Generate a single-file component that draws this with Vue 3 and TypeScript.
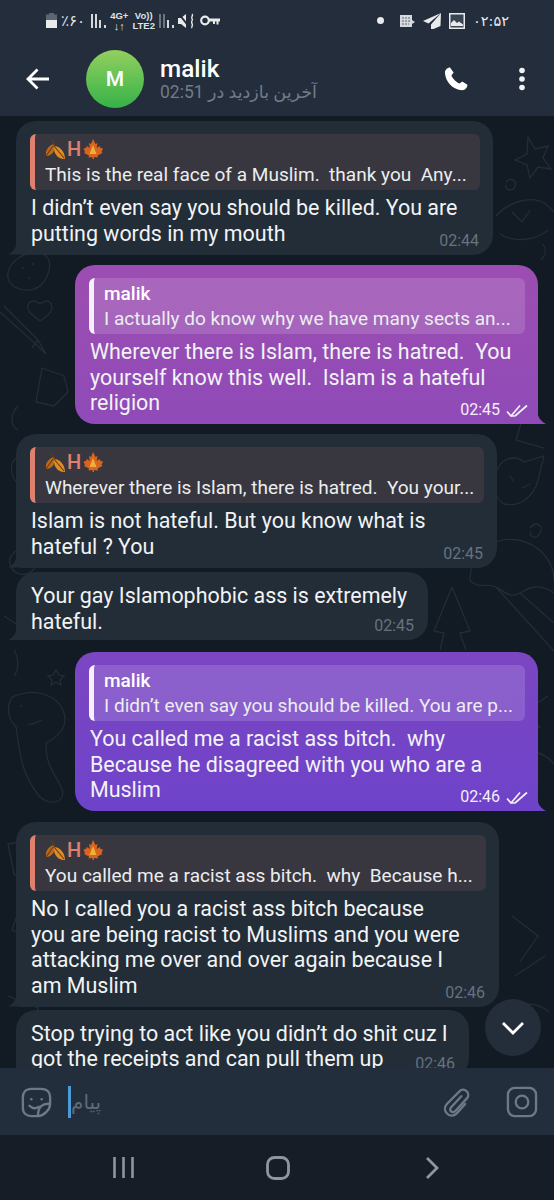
<script setup lang="ts">
// Telegram chat screen, dark theme with the purple outgoing gradient.
interface Message {
  out: boolean
  width: number
  gap: number
  author?: string
  quote?: string
  lines: string[]
  time: string
}

const messages: Message[] = [
  { out: false, width: 477, gap: 0, author: 'H', quote: 'This is the real face of a Muslim.  thank you  Any...', lines: ['I didn’t even say you should be killed. You are', 'putting words in my mouth'], time: '02:44' },
  { out: true, width: 463, gap: 10.5, author: 'malik', quote: 'I actually do know why we have many sects an...', lines: ['Wherever there is Islam, there is hatred.  You', 'yourself know this well.  Islam is a hateful', 'religion'], time: '02:45' },
  { out: false, width: 481, gap: 10, author: 'H', quote: 'Wherever there is Islam, there is hatred.  You your...', lines: ['Islam is not hateful. But you know what is', 'hateful ? You'], time: '02:45' },
  { out: false, width: 412, gap: 4.5, lines: ['Your gay Islamophobic ass is extremely', 'hateful.'], time: '02:45' },
  { out: true, width: 463, gap: 12, author: 'malik', quote: 'I didn’t even say you should be killed. You are p...', lines: ['You called me a racist ass bitch.  why', 'Because he disagreed with you who are a', 'Muslim'], time: '02:46' },
  { out: false, width: 483, gap: 11, author: 'H', quote: 'You called me a racist ass bitch.  why  Because h...', lines: ['No I called you a racist ass bitch because', 'you are being racist to Muslims and you were', 'attacking me over and over again because I', 'am Muslim'], time: '02:46' },
  { out: false, width: 453, gap: 3, lines: ['Stop trying to act like you didn’t do shit cuz I', 'got the receipts and can pull them up'], time: '02:46' },
]
</script>

<template>
  <div class="page">
    <header class="top">
      <div class="status">
        <div class="status-left">
          <svg width="11" height="15" viewBox="0 0 11 15"><path d="M3 0h5v1.500h3V15H0V1.500h3z" fill="#5c6672" /><rect y="7" width="11" height="8" fill="#e8eaec" /></svg>
          <span class="st-text">٪۶۰</span>
          <svg width="15" height="14" viewBox="0 0 15 14"><path d="M0 0h2v14H0zM4 0h2v14H4zM8 6h2v8H8zM13 11h2v3h-2z" fill="#d5d8dc" /></svg>
          <div class="stack"><span>4G+</span><span class="arrows">↓↑</span></div>
          <div class="stack"><span>Vo))</span><span>LTE2</span></div>
          <svg width="15" height="14" viewBox="0 0 15 14"><path d="M0 0h2v14H0zM4 0h2v14H4z" fill="#6b7480" /><path d="M8 6h2v8H8zM13 11h2v3h-2z" fill="#d5d8dc" /></svg>
          <svg width="18" height="16" viewBox="0 0 18 16"><path d="M0 5h3l5-4v14l-5-4H0z" fill="#e8eaec" /><path d="M1 1l11 14" stroke="#242d3b" stroke-width="2" /><path d="M14 1c2 1.500-1.500 3 0 4.500s-1.500 3 0 5 -1 3 0 4.500" fill="none" stroke="#e8eaec" stroke-width="1.400" /></svg>
          <svg width="20" height="11" viewBox="0 0 20 11"><circle cx="5" cy="5.500" r="3.800" fill="none" stroke="#e8eaec" stroke-width="2.200" /><path d="M9 3.500h11v3h-1.500v3h-2v-3h-1.500v2.500h-2V6.500H9z" fill="#e8eaec" /></svg>
        </div>
        <div class="status-right">
          <span class="dot"></span>
          <svg width="15" height="12" viewBox="0 0 15 12"><path d="M0 0h12v5l3 2-3 2v3H0z" fill="#d5d8dc" /><path d="M2 3h8M2 6h8M2 9h7" stroke="#5c6672" stroke-width="1" stroke-dasharray="2 1" /></svg>
          <svg width="18" height="16" viewBox="0 0 18 16"><path d="M18 0L0 8l5.500 2.500L18 0 8 11.500V16h2.500l7-3z" fill="#e8eaec" /></svg>
          <svg width="16" height="16" viewBox="0 0 16 16"><rect width="16" height="16" fill="#e8eaec" /><rect x="1.500" y="1.500" width="13" height="13" fill="#3a4552" /><path d="M2 13V10l3-3 3 3 2-1.500 4 3V13z" fill="#e8eaec" /></svg>
          <span class="clock">۰۲:۵۲</span>
        </div>
      </div>
      <div class="bar">
        <svg class="back" width="24" height="22" viewBox="0 0 24 22"><path d="M23 11H2M11.500 1.500L2 11l9.500 9.500" fill="none" stroke="#fff" stroke-width="2.800" /></svg>
        <div class="avatar">M</div>
        <div class="who">
          <div class="name">malik</div>
          <div class="seen" dir="rtl">آخرین بازدید در 02:51</div>
        </div>
        <svg class="phone" width="26" height="26" viewBox="0 0 24 24"><path d="M6.600 1.500l3.200 4.600-2 2.600c.9 2.700 4.600 6.400 7.500 7.500l2.500-2 4.700 3.200c.2 2.500-2.300 5.100-4.900 5-8.600-.7-15.200-7.700-15.800-16-.1-2.600 2.300-5 4.800-4.900z" fill="#fff" /></svg>
        <svg class="kebab" width="8" height="24" viewBox="0 0 8 24"><circle cx="4" cy="3.500" r="2.800" fill="#f2f3f4" /><circle cx="4" cy="12" r="2.800" fill="#f2f3f4" /><circle cx="4" cy="20.500" r="2.800" fill="#f2f3f4" /></svg>
      </div>
    </header>

    <main class="chat">
      <svg class="doodles" width="554" height="952" viewBox="0 0 554 952" fill="none" stroke="#222d37" stroke-width="1.300">
        <!-- right edge -->
        <path d="M528 21l7 12 13-3-5 12 8 11-13-2-8 11-3-13-12-5 12-6z" />
        <path d="M506 66c4-5 11-2 9 4s-10 5-9-1" />
        <path d="M496 100c14-16 40-22 52-10l6 6M500 118c12 8 34 8 48-4M512 96l10 10 8-12" />
        <path d="M543 128c4 6 2 12 -2 16M500 290l22 14-6 20 28 8" />
        <path d="M498 352c6-12 20-12 26-6l20-6-6 24c-4 16-18 28-34 24-10-6-14-24-6-36zM510 360l4 6M522 372l8-4" />
        <path d="M530 412c6-8 14-2 10 5s-12 4-9-2" />
        <path d="M470 465c0-30 24-45 48-41 22 4 36 22 36 40M470 465c10 8 18 2 26 6s14 12 24 6 20-10 34 0M496 471l58 64M520 477l34 30" />
        <path d="M452 471l18 44-10 2 6 17M452 471l-18 44 10 2-4 17" />
        <path d="M548 580l-22 14 14 18M510 640c16-10 34-4 44 8M512 800l26 20-18 26M505 900c10-14 30-16 44-4M515 860l30-20" />
        <!-- left edge -->
        <path d="M40 137c-16-2-30 8-32 20s12 20 26 16 24-32 6-36zM22 152h2M32 148h2M28 162h2" />
        <path d="M42 187c8-6 14 4 6 12l-8 6-10-8c-6-8 2-16 8-10z" />
        <path d="M0 196l40 36 6 6-8-14-34-34M38 224l-6 8" />
        <path d="M42 252l22 8 4 16-14 14-18-4zM18 290c-8 8-8 20 0 24" />
        <path d="M22 345c-6-6-12 0-10 12s14 16 18 8-2-16-8-20z" />
        <path d="M10 442c6-10 14-14 22-6s4 20-6 22-18-6-16-16zM4 500l34 22" />
        <path d="M56 554l3 5 5 1-4 4 1 5-5-3-5 3 1-5-4-4 5-1z" />
        <path d="M12 581c-6 10-4 22 4 30 4 24 4 46 24 70 12 10 26 4 22-8-8-18-16-22-16-46 12-6 22-16 18-30s-24-28-52-16z" />
        <path d="M20 590h2M42 604c-6 2-10 6-14 4M14 560c6-8 4-20 0-26" />
        <path d="M8 728l38-6 16 30-24 20-24-14zM20 790l30 10-10 24-28-10zM8 880l30 12-4 20" />
      </svg>

      <div class="thread">
        <article
          v-for="(m, i) in messages"
          :key="i"
          class="bubble"
          :class="m.out ? 'out' : 'in'"
          :style="{ width: m.width + 'px', marginTop: m.gap + 'px' }"
        >
          <div v-if="m.quote" class="quote">
            <div class="quote-name">
              <template v-if="!m.out">
                <svg class="leaf" width="21" height="21" viewBox="0 0 21 21">
                  <path d="M1 17C0 11 4 6 9 5c2 5-1 12-8 12z" fill="#b96d1c" />
                  <path d="M9 7c6 0 11 6 11 13-6 1-12-5-11-13z" fill="#df8c23" />
                  <path d="M1 17l7-10M9 7l10 12M6 1c2 1 3 3 3 6" stroke="#6e3810" stroke-width="1.100" fill="none" />
                </svg>
                <span class="h">H</span>
                <svg class="leaf" width="20" height="20" viewBox="0 0 20 20">
                  <path d="M10 0l2.500 5 2-1-.8 5 3-2 .8 2 2.500.5-1.500 3.500 1 1-5 2.500.5 2-4-.5V20H9.500v-2l-4 .5.5-2-5-2.500 1-1L.5 9.500 3 9l.8-2 3 2-.8-5 2 1z" fill="#d9641e" />
                  <path d="M10 6l3.500 9h-7z" fill="#efb03a" />
                </svg>
              </template>
              <template v-else>{{ m.author }}</template>
            </div>
            <div class="quote-text">{{ m.quote }}</div>
          </div>
          <p class="text">
            <span v-for="line in m.lines" :key="line" class="line">{{ line }}</span>
          </p>
          <div class="meta">
            <span>{{ m.time }}</span>
            <svg v-if="m.out" width="22" height="13" viewBox="0 0 22 13" fill="none" stroke="#f5eef9" stroke-width="1.700"><path d="M1 7.500l4 4.500L14 1.500M9 12L21 1.500M5 12h4" /></svg>
          </div>
        </article>
      </div>

      <button class="fab" type="button" aria-label="down">
        <svg width="24" height="14" viewBox="0 0 24 14"><path d="M2 2l10 10L22 2" fill="none" stroke="#fff" stroke-width="2.800" /></svg>
      </button>
    </main>

    <footer class="composer">
      <svg class="ic" width="31" height="31" viewBox="0 0 33 33" fill="none" stroke="#6d7985" stroke-width="2.500">
        <path d="M31 18V11C31 5 27 2 21 2H11C5 2 2 6 2 11v11c0 6 4 9 9 9h7c6 0 13-7 13-13zM31 18c-8-1-13 3-13 13" />
        <path d="M9 20c3 3 7 3 10 1" stroke-linecap="round" />
        <circle cx="11" cy="13" r="1.300" fill="#6d7985" stroke="none" />
        <circle cx="22" cy="13" r="1.300" fill="#6d7985" stroke="none" />
      </svg>
      <span class="caret"></span>
      <span class="placeholder" dir="rtl">پیام</span>
      <svg class="clip" width="28" height="32" viewBox="0 0 29 32" fill="none" stroke="#6d7985" stroke-width="2.400" stroke-linecap="round">
        <path d="M19 10L8 22c-2 3 2 6 4.500 3.500L25 12c4-5-3-12-8-7L4 18c-6 7 3 16 10 10l9-10" />
      </svg>
      <svg class="ic" width="32" height="32" viewBox="0 0 33 33" fill="none" stroke="#6d7985" stroke-width="2.400">
        <rect x="2" y="2" width="29" height="29" rx="7" />
        <circle cx="16.500" cy="16.500" r="6.500" />
      </svg>
    </footer>

    <nav class="nav">
      <svg width="21" height="23" viewBox="0 0 21 23"><path d="M1.500 1v21M10.500 1v21M19.500 1v21" stroke="#8f969d" stroke-width="2.600" /></svg>
      <svg width="24" height="24" viewBox="0 0 24 24"><rect x="1.500" y="1.500" width="21" height="21" rx="7" fill="none" stroke="#8f969d" stroke-width="2.800" /></svg>
      <svg class="nav-back" width="14" height="24" viewBox="0 0 14 24"><path d="M2 2l10 10L2 22" fill="none" stroke="#8f969d" stroke-width="2.800" /></svg>
    </nav>
  </div>
</template>

<style scoped>
.page {
  width: 554px;
  height: 1200px;
  display: flex;
  flex-direction: column;
  overflow: hidden;
  background: #121a23;
  font-family: Roboto, "DejaVu Sans", sans-serif;
  color: #f1f3f5;
}

.top {
  height: 116px;
  flex: none;
  background: #242d3b;
}

.status {
  height: 36px;
  display: flex;
  align-items: center;
  justify-content: space-between;
  padding: 5px 45px 0 46px;
  box-sizing: border-box;
}

.status-left,
.status-right {
  display: flex;
  align-items: center;
}

.status-left {
  gap: 4px;
}

.status-right {
  gap: 8px;
}

.st-text {
  font: 15px "DejaVu Sans", sans-serif;
  color: #dfe2e5;
  margin-right: 2px;
}

.stack {
  display: flex;
  flex-direction: column;
  align-items: center;
  font: 700 9.500px/10px "Liberation Sans", sans-serif;
  color: #dfe2e5;
}

.arrows {
  font-size: 11px;
}

.dot {
  width: 7px;
  height: 7px;
  border-radius: 50%;
  background: #e8eaec;
  margin-right: 8px;
}

.clock {
  font: 14.500px "DejaVu Sans", sans-serif;
  color: #e8eaec;
  direction: ltr;
  unicode-bidi: isolate;
}

.bar {
  height: 80px;
  display: flex;
  align-items: center;
  padding-left: 26px;
  padding-top: 6px;
  box-sizing: border-box;
}

.back {
  flex: none;
}

.avatar {
  width: 58px;
  height: 58px;
  margin-left: 36px;
  flex: none;
  border-radius: 50%;
  background: linear-gradient(180deg, #92d05e, #36b249);
  display: flex;
  align-items: center;
  justify-content: center;
  font-size: 21px;
  font-weight: 500;
  color: #fff;
}

.who {
  margin-left: 16px;
  flex: 1;
  display: flex;
  flex-direction: column;
  align-items: flex-start;
}

.name {
  font-size: 24.300px;
  line-height: 27px;
  font-weight: 500;
  color: #fff;
}

.seen {
  font-size: 17.500px;
  line-height: 21px;
  color: #717c89;
}

.phone {
  margin-right: 49px;
  flex: none;
}

.kebab {
  margin-right: 28px;
  flex: none;
}

.chat {
  position: relative;
  flex: 1;
  min-height: 0;
  overflow: hidden;
}

.doodles {
  position: absolute;
  inset: 0;
}

.thread {
  position: relative;
  display: flex;
  flex-direction: column;
  padding: 5px 16px 0;
}

.bubble {
  position: relative;
  flex: none;
  box-sizing: border-box;
  border-radius: 20px;
  padding: 11px 15px 6px;
}

.bubble:has(.quote) {
  padding: 13px 13px 8.500px 15px;
}

.bubble.in {
  align-self: flex-start;
  background: #222d38;
  border-bottom-left-radius: 6px;
}

.bubble.out {
  align-self: flex-end;
  background: linear-gradient(180deg, #a950a8 0, #9a4db2 300px, #6f43c9 800px, #6a42cc 1200px) fixed;
  border-bottom-right-radius: 6px;
}

.bubble::after {
  content: "";
  position: absolute;
  bottom: 0;
  width: 14px;
  height: 16px;
  background: inherit;
}

.bubble.in::after {
  left: -8px;
  clip-path: path("M9 0C9 8 6 13 0 16H14V0Z");
}

.bubble.out::after {
  right: -8px;
  clip-path: path("M5 0C5 8 8 13 14 16H0V0Z");
}

.quote {
  height: 56px;
  margin-left: -1px;
  box-sizing: border-box;
  border-left: 5px solid #e0806f;
  border-radius: 6px;
  background: #38373f;
  padding: 2px 8px 0 10px;
  overflow: hidden;
}

.out .quote {
  border-left-color: #f5f0fa;
  background: rgba(255, 255, 255, 0.14);
}

.quote-name {
  height: 26px;
  display: flex;
  align-items: center;
  font-size: 19px;
  font-weight: 500;
  color: #fff;
}

.h {
  font-size: 20px;
  color: #e0806f;
  margin: 0 2px 0 1px;
}

.leaf {
  flex: none;
}

.quote-text {
  font-size: 19.050px;
  line-height: 26px;
  white-space: pre;
  color: #ebedef;
}

.quote + .text {
  margin-top: 5px;
}

.text {
  margin: 0;
  font-size: 21.450px;
  line-height: 25.500px;
  color: #f1f3f5;
}

.line {
  display: block;
  white-space: pre;
}

.meta {
  position: absolute;
  right: 14px;
  bottom: 4px;
  display: flex;
  align-items: center;
  gap: 6px;
  font-size: 16px;
  line-height: 20px;
  color: #66727f;
}

.out .meta {
  right: 10px;
  color: #f5eef9;
}

.fab {
  position: absolute;
  left: 485px;
  top: 883px;
  width: 56px;
  height: 57px;
  border: 0;
  padding: 0;
  border-radius: 50%;
  background: #232e3a;
  display: flex;
  align-items: center;
  justify-content: center;
}

.composer {
  height: 67px;
  flex: none;
  display: flex;
  align-items: center;
  background: #232e3c;
  padding: 1px 16px 0 21px;
  box-sizing: border-box;
}

.ic,
.clip {
  flex: none;
}

.caret {
  width: 3px;
  height: 32px;
  margin-left: 16px;
  background: #4b9bd8;
  flex: none;
}

.placeholder {
  flex: 1;
  direction: ltr;
  text-align: left;
  font: 20px "DejaVu Sans", sans-serif;
  color: #5d6975;
}

.clip {
  margin-right: 35px;
}

.nav {
  height: 65px;
  flex: none;
  background: #161d26;
  display: flex;
  align-items: center;
  padding: 0 0 0 113px;
  gap: 132px;
}

.nav-back {
  margin-left: 3px;
}
</style>

<style>
html,
body {
  margin: 0;
  background: #121a23;
}
</style>
